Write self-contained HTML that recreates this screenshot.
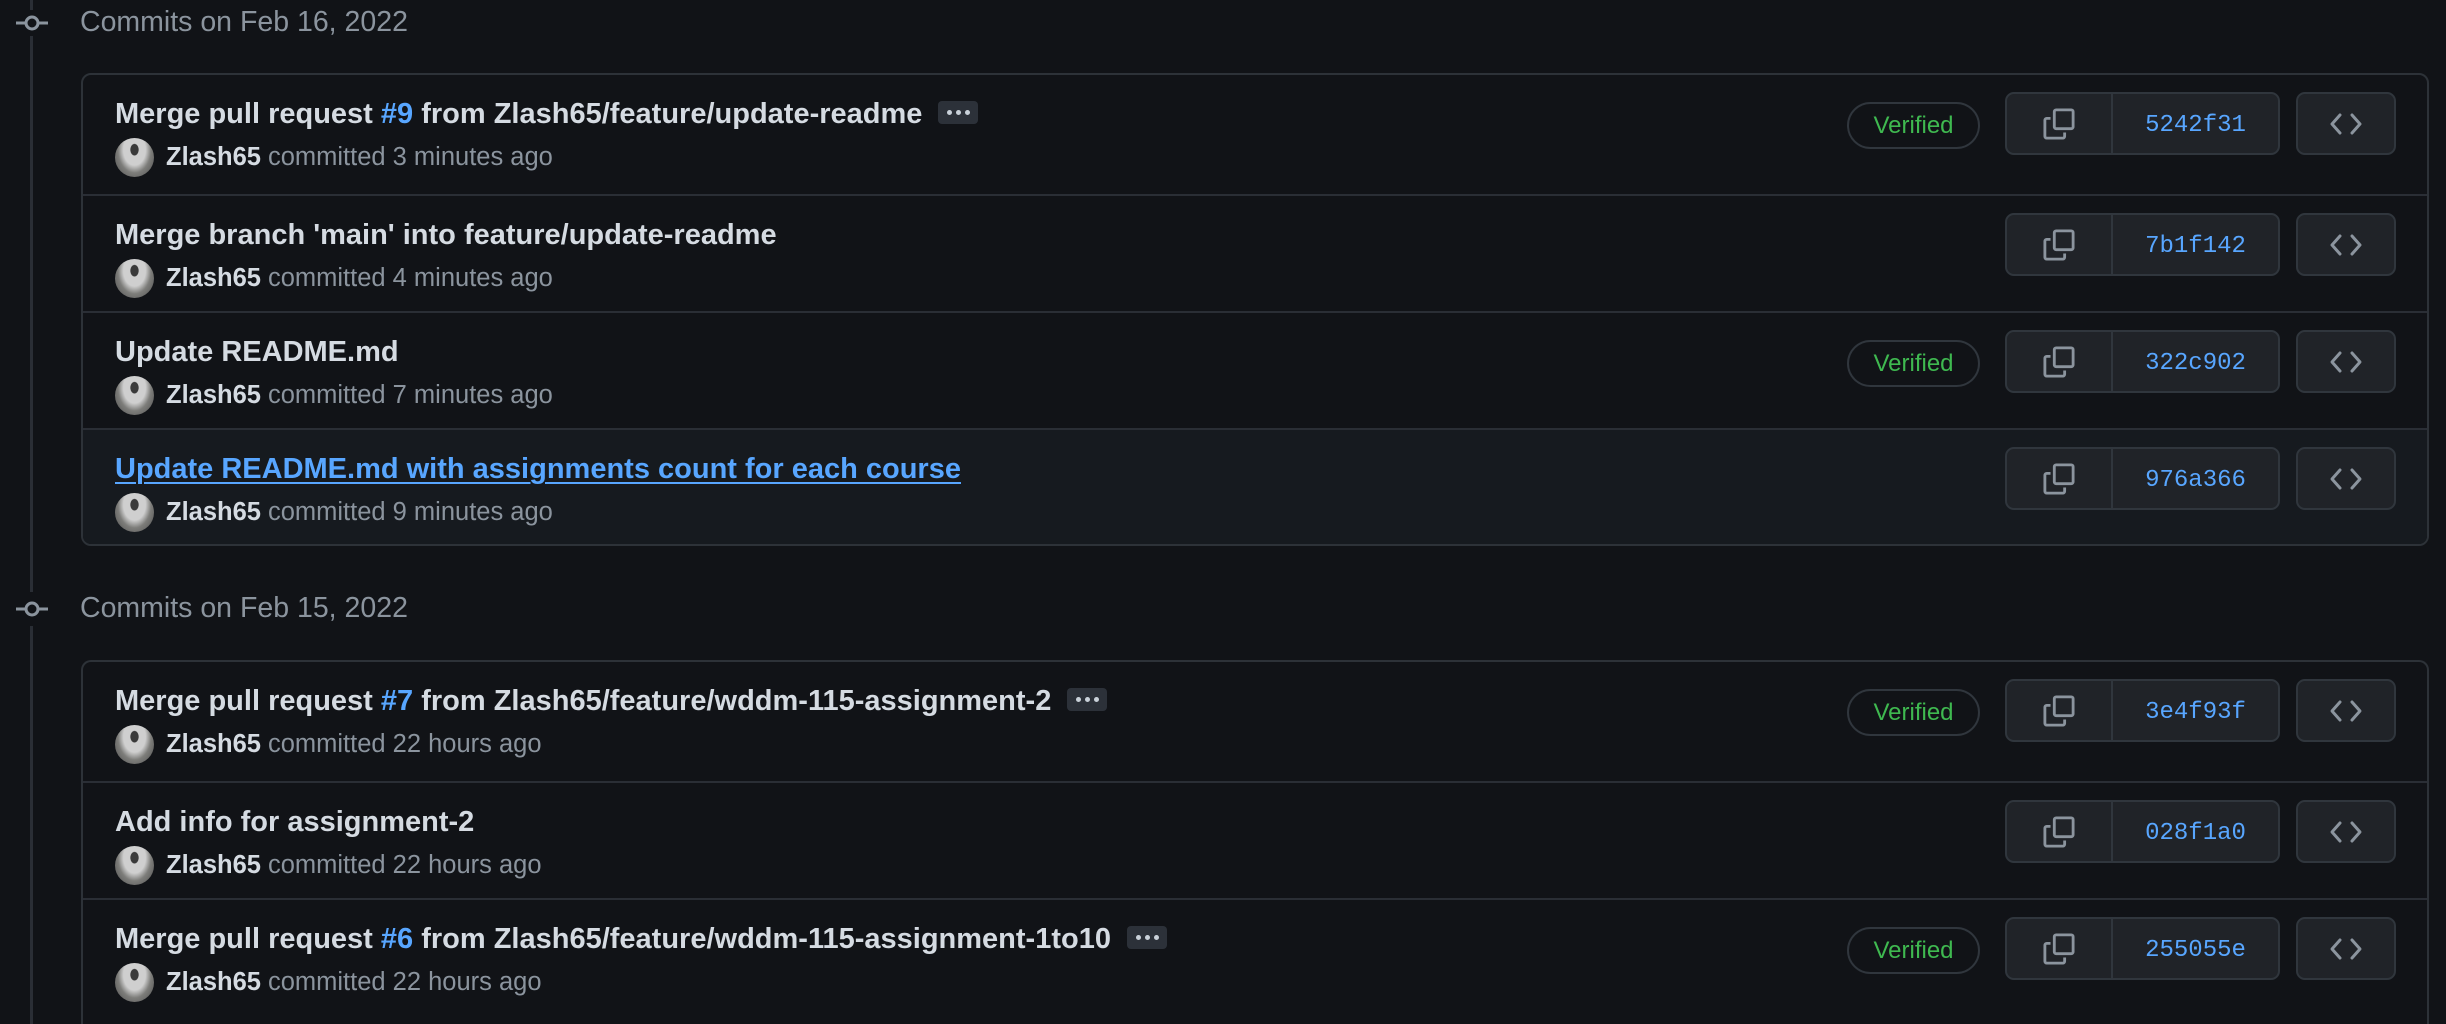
<!DOCTYPE html>
<html style="width:2446px;height:1024px;overflow:hidden"><head><meta charset="utf-8"><style>
*{margin:0;padding:0;box-sizing:border-box}
body{width:2446px;height:1024px;background:#111317;font-family:"Liberation Sans",Arial,sans-serif;overflow:hidden;position:relative}
.vline{position:absolute;left:30px;width:3px;background:#2a2e35}
.tl{position:absolute;left:16px;width:32px;height:20px}
.hdr{position:absolute;left:80px;font-size:28.5px;color:#8b949e;line-height:30px}
.box{position:absolute;left:81px;width:2348px;border:2px solid #2d3238;border-radius:10px;overflow:hidden;background:#111317}
.row{position:relative;height:117px;border-top:2px solid #2a2e35}
.row:first-child{border-top:none;height:119px}
.row.hov{background:#161a1f}
.title{position:absolute;left:32px;top:22px;font-size:29px;font-weight:bold;color:#d5dbe2;white-space:nowrap;line-height:34px}
.title a{color:#58a6ff;text-decoration:none;font-weight:bold}
.title a.u{text-decoration:underline;text-decoration-thickness:2px;text-underline-offset:4px}
.ell{display:inline-block;vertical-align:middle;margin-left:16px;width:40px;height:23px;background:#2c3139;border-radius:4px;position:relative;top:-3px}
.ell i{position:absolute;top:9px;width:5px;height:5px;border-radius:50%;background:#c9d1d9}
.meta{position:absolute;left:32px;top:62px;height:40px;display:flex;align-items:center;font-size:25.5px;color:#8b949e;white-space:nowrap}
.av{width:39px;height:39px;border-radius:50%;background:radial-gradient(ellipse at 50% 30%,#3a3a3a 0 14%,#cfcfcf 16% 40%,#7d7d7a 60%,#4a4a4a 100%);margin-right:12px}
.meta b{color:#d5dbe2;margin-right:7px}
.ver{position:absolute;left:1764px;top:27px;width:133px;height:47px;border:2px solid #30363d;border-radius:24px;color:#3fb950;font-size:24px;text-align:center;line-height:43px}
.grp{position:absolute;left:1922px;top:17px;width:275px;height:63px;border:2px solid #30363d;border-radius:9px;background:#202328;display:flex}
.cp{width:106px;border-right:2px solid #30363d;display:flex;align-items:center;justify-content:center}
.sha{flex:1;color:#58a6ff;font-family:"Liberation Mono",monospace;font-size:24px;display:flex;align-items:center;justify-content:center;padding-top:3px}
.code{position:absolute;left:2213px;top:17px;width:100px;height:63px;border:2px solid #30363d;border-radius:9px;background:#202328;display:flex;align-items:center;justify-content:center}
</style></head><body>
<div class="vline" style="top:0;height:10px"></div>
<div class="vline" style="top:36px;height:556px"></div>
<div class="vline" style="top:626px;height:398px"></div>
<svg class="tl" style="top:13px" viewBox="0 0 32 20"><circle cx="16" cy="10" r="6" fill="none" stroke="#8b949e" stroke-width="3"/><path d="M0 10h10M22 10h10" stroke="#8b949e" stroke-width="3"/></svg>
<svg class="tl" style="top:599px" viewBox="0 0 32 20"><circle cx="16" cy="10" r="6" fill="none" stroke="#8b949e" stroke-width="3"/><path d="M0 10h10M22 10h10" stroke="#8b949e" stroke-width="3"/></svg>
<div class="hdr" style="top:7px">Commits on Feb 16, 2022</div>
<div class="hdr" style="top:593px">Commits on Feb 15, 2022</div>

<div class="box" style="top:73px;height:473px">
 <div class="row"><div class="title">Merge pull request <a>#9</a> from Zlash65/feature/update-readme<span class="ell"><i style="left:9px"></i><i style="left:18px"></i><i style="left:27px"></i></span></div>
  <div class="meta"><div class="av"></div><b>Zlash65</b>committed 3 minutes ago</div>
  <div class="ver">Verified</div><div class="grp"><div class="cp">CP</div><div class="sha">5242f31</div></div><div class="code">CD</div></div>
 <div class="row"><div class="title">Merge branch 'main' into feature/update-readme</div>
  <div class="meta"><div class="av"></div><b>Zlash65</b>committed 4 minutes ago</div>
  <div class="grp"><div class="cp">CP</div><div class="sha">7b1f142</div></div><div class="code">CD</div></div>
 <div class="row"><div class="title">Update README.md</div>
  <div class="meta"><div class="av"></div><b>Zlash65</b>committed 7 minutes ago</div>
  <div class="ver">Verified</div><div class="grp"><div class="cp">CP</div><div class="sha">322c902</div></div><div class="code">CD</div></div>
 <div class="row hov"><div class="title"><a class="u">Update README.md with assignments count for each course</a></div>
  <div class="meta"><div class="av"></div><b>Zlash65</b>committed 9 minutes ago</div>
  <div class="grp"><div class="cp">CP</div><div class="sha">976a366</div></div><div class="code">CD</div></div>
</div>

<div class="box" style="top:660px;height:364px;border-bottom:none;border-radius:10px 10px 0 0">
 <div class="row"><div class="title">Merge pull request <a>#7</a> from Zlash65/feature/wddm-115-assignment-2<span class="ell"><i style="left:9px"></i><i style="left:18px"></i><i style="left:27px"></i></span></div>
  <div class="meta"><div class="av"></div><b>Zlash65</b>committed 22 hours ago</div>
  <div class="ver">Verified</div><div class="grp"><div class="cp">CP</div><div class="sha">3e4f93f</div></div><div class="code">CD</div></div>
 <div class="row"><div class="title">Add info for assignment-2</div>
  <div class="meta"><div class="av"></div><b>Zlash65</b>committed 22 hours ago</div>
  <div class="grp"><div class="cp">CP</div><div class="sha">028f1a0</div></div><div class="code">CD</div></div>
 <div class="row" style="height:110px"><div class="title">Merge pull request <a>#6</a> from Zlash65/feature/wddm-115-assignment-1to10<span class="ell"><i style="left:9px"></i><i style="left:18px"></i><i style="left:27px"></i></span></div>
  <div class="meta"><div class="av"></div><b>Zlash65</b>committed 22 hours ago</div>
  <div class="ver">Verified</div><div class="grp"><div class="cp">CP</div><div class="sha">255055e</div></div><div class="code">CD</div></div>
</div>
<script>
var cp='<svg width="32" height="32" viewBox="0 0 34 34" fill="none" stroke="#8b949e" stroke-width="3"><rect x="12" y="2" width="20" height="20" rx="2"/><path d="M8 11H4a2 2 0 0 0-2 2v17a2 2 0 0 0 2 2h17a2 2 0 0 0 2-2v-4"/></svg>';
var cd='<svg width="34" height="24" viewBox="0 0 34 24" fill="none" stroke="#8b949e" stroke-width="3" stroke-linecap="round" stroke-linejoin="round"><path d="M11 3 3 12l8 9M23 3l8 9-8 9"/></svg>';
document.querySelectorAll('.cp').forEach(e=>e.innerHTML=cp);
document.querySelectorAll('.code').forEach(e=>e.innerHTML=cd);
</script>
</body></html>
